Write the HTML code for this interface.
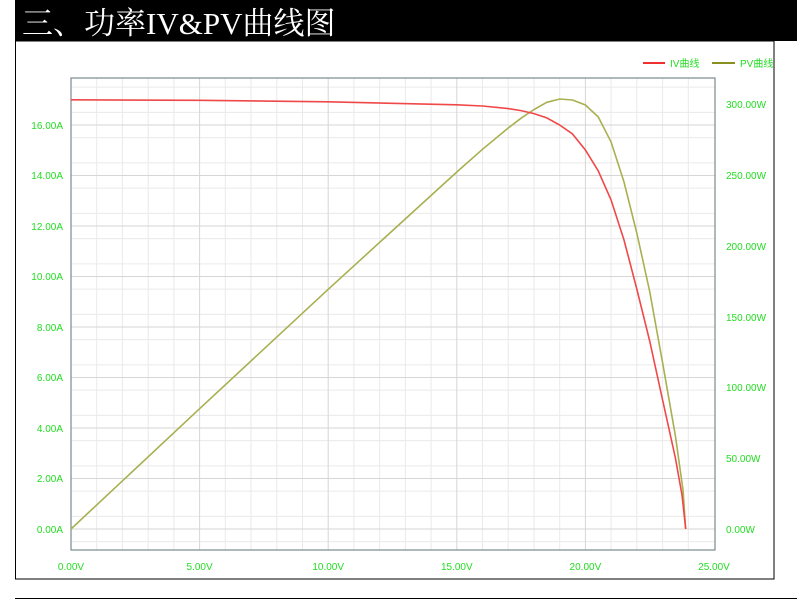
<!DOCTYPE html>
<html><head><meta charset="utf-8"><style>
html,body{margin:0;padding:0;background:#fff;width:797px;height:599px;overflow:hidden}
</style></head><body>
<svg width="797" height="599" xmlns="http://www.w3.org/2000/svg" style="display:block">
<rect x="15" y="0" width="782" height="41" fill="#000"/>
<text x="22" y="34" fill="#fff" font-family="'Liberation Serif','Noto Serif CJK SC',serif" font-size="31">三、功率IV&amp;PV曲线图</text>
<rect x="15.5" y="41" width="758.5" height="538" fill="none" stroke="#000" stroke-width="1"/>
<line x1="15" y1="598.5" x2="797" y2="598.5" stroke="#000"/>
<g stroke="#eaeaea" stroke-width="1">
<path d="M96.7 78V550M122.4 78V550M148.2 78V550M173.9 78V550M225.3 78V550M251 78V550M276.8 78V550M302.5 78V550M353.9 78V550M379.6 78V550M405.4 78V550M431.1 78V550M482.5 78V550M508.2 78V550M534 78V550M559.7 78V550M611.1 78V550M636.8 78V550M662.6 78V550M688.3 78V550"/>
<path d="M71 541.6H715M71 516.4H715M71 491.1H715M71 465.9H715M71 440.6H715M71 415.4H715M71 390.1H715M71 364.9H715M71 339.6H715M71 314.4H715M71 289.1H715M71 263.9H715M71 238.6H715M71 213.4H715M71 188.1H715M71 162.9H715M71 137.6H715M71 112.4H715M71 87.1H715"/>
</g>
<g stroke="#d6d6d6" stroke-width="1">
<path d="M199.6 78V550M328.2 78V550M456.8 78V550M585.4 78V550"/>
<path d="M71 529H715M71 478.5H715M71 428H715M71 377.5H715M71 327H715M71 276.5H715M71 226H715M71 175.5H715M71 125H715"/>
</g>
<rect x="71" y="78" width="644" height="472" fill="none" stroke="#7a8a8c" stroke-width="1.2"/>
<polyline fill="none" stroke="#a8b050" stroke-width="1.6" points="71,529 199.6,408.7 328.2,289.3 456.8,172 482.5,149.3 508.2,128 521.1,118.2 534,109.5 546.8,102.3 559.7,99 572.5,100 585.4,105 598.3,117 611.1,142 624,182 636.8,233 649.7,291.5 662.6,362.8 675.4,435.8 683,490 685.7,529"/>
<polyline fill="none" stroke="#f04848" stroke-width="1.6" points="71,99.8 199.6,100.3 328.2,101.8 456.8,104.8 482.5,106 508.2,108.6 521.1,110.6 534,113.6 546.8,117.9 559.7,125 572.5,134 585.4,150 598.3,171 611.1,200 624,240 636.8,289 649.7,341 662.6,400 675.4,458 682,495 685.7,529"/>
<g font-family="'Liberation Sans','Noto Sans CJK SC',sans-serif" font-size="10" fill="#22dd22">
<g text-anchor="end">
<text x="63" y="533">0.00A</text><text x="63" y="482">2.00A</text><text x="63" y="432">4.00A</text><text x="63" y="381">6.00A</text><text x="63" y="331">8.00A</text><text x="63" y="280">10.00A</text><text x="63" y="230">12.00A</text><text x="63" y="179">14.00A</text><text x="63" y="129">16.00A</text>
</g>
<text x="726" y="533">0.00W</text><text x="726" y="462">50.00W</text><text x="726" y="391">100.00W</text><text x="726" y="321">150.00W</text><text x="726" y="250">200.00W</text><text x="726" y="179">250.00W</text><text x="726" y="108">300.00W</text>
<g text-anchor="middle">
<text x="71" y="570">0.00V</text><text x="199.6" y="570">5.00V</text><text x="328.2" y="570">10.00V</text><text x="456.8" y="570">15.00V</text><text x="585.4" y="570">20.00V</text><text x="714" y="570">25.00V</text>
</g>
<text x="670" y="67">IV曲线</text><text x="740" y="67">PV曲线</text>
</g>
<line x1="643" y1="63" x2="665" y2="63" stroke="#f03030" stroke-width="2"/>
<line x1="712" y1="63" x2="735" y2="63" stroke="#8a9020" stroke-width="2"/>
</svg>
</body></html>
